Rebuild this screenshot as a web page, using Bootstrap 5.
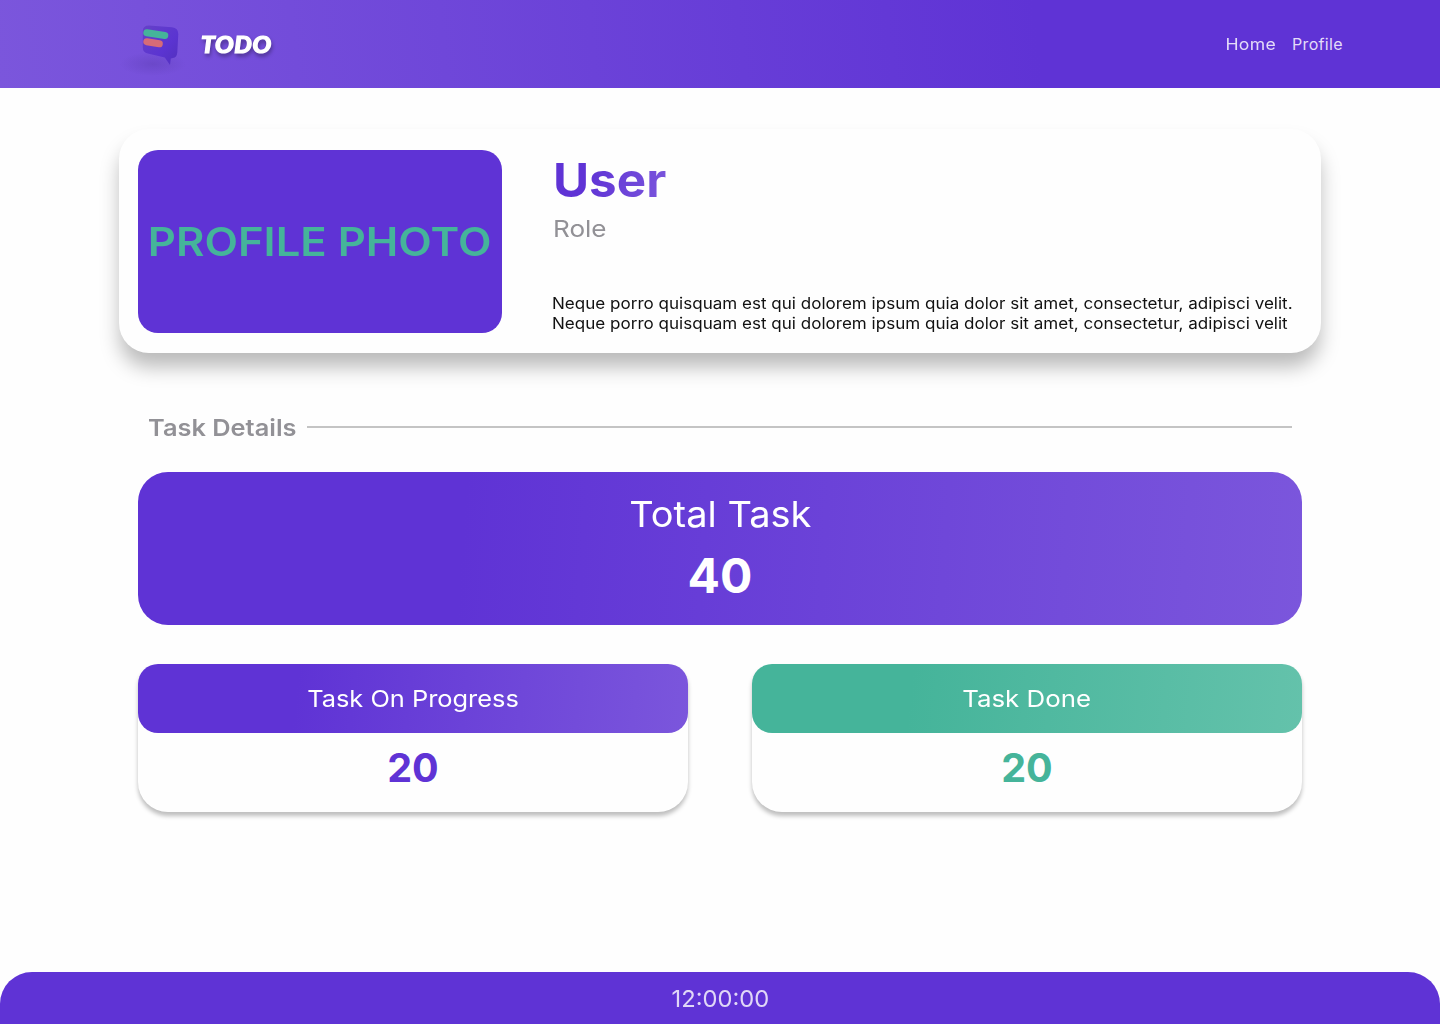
<!DOCTYPE html>
<html lang="en">
<head>
<meta charset="utf-8">
<meta name="viewport" content="width=device-width, initial-scale=1">
<title>TODO - Profile</title>
<link href="https://cdn.jsdelivr.net/npm/bootstrap@5.3.0/dist/css/bootstrap.min.css" rel="stylesheet">
<style>
  :root { --violet: #5f33d5; --violet-soft: #7b56dc; --mint: #45b49a; --mint-soft: #64c2ab; --muted: #929196; }
  body { font-family: Inter, "Open Sans", sans-serif; background: #fefefe; color: #111; line-height: 1.22; }
  /* widened lettering */
  .wide { display: inline-block; transform: scaleX(var(--stretch, 1.05)); }
  .wide-start { transform-origin: left center; }
  .topbar { height: 88px; padding: 2px 97px 0 119px; background: linear-gradient(264deg, var(--violet) 28%, var(--violet-soft) 100%); }
  .topbar svg { margin-top: -2px; }
  .topbar .nav-link { color: #e4dcf8; font-size: 16px; padding: 0; letter-spacing: .35px; }
  .nav-home { --stretch: 1.1; transform-origin: right center; }
  .brand-name { font-family: Lato, sans-serif; font-weight: 900; font-style: italic; font-size: 23.5px; margin-top: -2px; letter-spacing: .6px; -webkit-text-stroke: 1.2px #fff; color: #fff; text-shadow: 1px 3px 4px rgba(0,0,0,.45); }
  .page-body { padding: 41px 119px 0; }
  .profile-card { height: 224px; padding: 21px 19px 20px; border-radius: 30px; background: #fefefe; box-shadow: 0 15px 20px -1px rgba(0,0,0,.27); }
  .photo-box { width: 364px; height: 183px; padding-top: 1px; border-radius: 20px; background: var(--violet); color: var(--mint); font-size: 39px; font-weight: 600; --stretch: 1.118; }
  .user-info { margin-left: 51px; }
  .user-name { font-size: 47px; font-weight: 700; line-height: 59px; --stretch: 1.05; background: linear-gradient(100deg, var(--violet) 30%, var(--violet-soft)); -webkit-background-clip: text; background-clip: text; color: transparent; }
  .user-role { font-size: 23.5px; line-height: 29px; margin-top: 5px; font-weight: 400; --stretch: 1.11; color: var(--muted); }
  .user-bio { font-size: 15.5px; line-height: 20px; --stretch: 1.1; margin-left: -1px; margin-bottom: -1px; }
  .details-head { padding: 0 29px; margin-top: 60px; height: 29px; color: var(--muted); }
  .details-title { font-size: 23.5px; font-weight: 600; width: 148px; padding-top: 2px; --stretch: 1.08; }
  .details-rule { height: 2px; margin: -2px 0 0 11px; background: #c4c4c4; }
  .details-body { padding: 0 19px; }
  .total-card { margin-top: 30px; height: 153px; border-radius: 30px; color: #fff; background: linear-gradient(94deg, var(--violet) 28%, var(--violet-soft)); padding-top: 20px; }
  .total-label { font-size: 36px; line-height: 44px; font-weight: 400; --stretch: 1.055; }
  .total-value { font-size: 48px; line-height: 59px; font-weight: 750; margin-top: 10px; }
  .stat-row { margin-top: 39px; gap: 64px; }
  .stat-card { flex: 1 1 0; height: 148px; border-radius: 20px 20px 30px 30px; background: #fefefe; box-shadow: 0 4px 4px rgba(0,0,0,.25); color: var(--violet); }
  .stat-head { height: 69px; padding-top: 2px; border-radius: 20px; color: #fff; font-size: 23.5px; font-weight: 400; --stretch: 1.08; background: linear-gradient(96deg, var(--violet) 29%, var(--violet-soft)); }
  .stat-value { font-size: 39.500px; line-height: 49px; font-weight: 750; margin-top: 11px; }
  .stat-done { color: var(--mint); }
  .stat-done .stat-head { background: linear-gradient(96deg, var(--mint) 29%, var(--mint-soft)); --stretch: 1.1; }
  .clock-bar { height: 52px; padding-top: 2px; border-radius: 32px 32px 0 0; background: var(--violet); color: #e0d7f7; font-size: 23.5px; --stretch: 1.01; }
</style>
</head>
<body>
<div class="d-flex flex-column vh-100">
  <nav class="topbar d-flex align-items-center justify-content-between">
    <a class="d-flex align-items-center text-decoration-none" href="#">
      <svg width="82" height="88" viewBox="119 0 82 88" aria-hidden="true">
        <defs>
          <linearGradient id="bubble" x1="0" y1="0" x2="1" y2="1"><stop offset="0" stop-color="#6541c8"/><stop offset=".6" stop-color="#5b34d1"/><stop offset="1" stop-color="#5230bd"/></linearGradient>
          <radialGradient id="ground"><stop offset="0" stop-color="#5f3fb8" stop-opacity=".5"/><stop offset="1" stop-color="#5f3fb8" stop-opacity="0"/></radialGradient>
        </defs>
        <ellipse cx="153" cy="64" rx="33" ry="12" fill="url(#ground)"/>
        <path d="M149 25.500l23 1.800q6.300.7 6.300 6.700l-1 18.500q-.5 5-4.300 5.500l-2.200.5-.8 6.500-5.200-7.500-17-4q-5-1-5-6V31q0-5.500 6.200-5.500z" fill="url(#bubble)"/>
        <path d="M146.800 32.800l18 2.700" stroke="#45b49a" stroke-width="7" stroke-linecap="round"/>
        <path d="M146.800 41.700l12.500 2.100" stroke="#d66b78" stroke-width="7" stroke-linecap="round"/>
      </svg>
      <span class="brand-name wide wide-start">TODO</span>
    </a>
    <div class="nav">
      <a class="nav-link wide nav-home" href="#">Home</a>
      <a class="nav-link ms-3" href="#">Profile</a>
    </div>
  </nav>
  <main class="page-body flex-grow-1">
    <section class="profile-card d-flex">
      <div class="photo-box d-flex align-items-center justify-content-center flex-shrink-0 text-nowrap"><span class="wide">PROFILE PHOTO</span></div>
      <div class="user-info d-flex flex-column align-items-start text-nowrap">
        <h1 class="user-name wide wide-start mb-0">User</h1>
        <div class="user-role wide wide-start">Role</div>
        <p class="user-bio wide wide-start mt-auto">Neque porro quisquam est qui dolorem ipsum quia dolor sit amet, consectetur, adipisci velit.<br>Neque porro quisquam est qui dolorem ipsum quia dolor sit amet, consectetur, adipisci velit</p>
      </div>
    </section>
    <div class="details-head d-flex align-items-center">
      <h2 class="details-title mb-0 text-nowrap"><span class="wide wide-start">Task Details</span></h2>
      <div class="details-rule flex-grow-1"></div>
    </div>
    <div class="details-body">
      <section class="total-card text-center">
        <div class="total-label"><span class="wide">Total Task</span></div>
        <div class="total-value">40</div>
      </section>
      <div class="stat-row d-flex">
        <section class="stat-card text-center">
          <div class="stat-head d-flex align-items-center justify-content-center"><span class="wide">Task On Progress</span></div>
          <div class="stat-value">20</div>
        </section>
        <section class="stat-card stat-done text-center">
          <div class="stat-head d-flex align-items-center justify-content-center"><span class="wide">Task Done</span></div>
          <div class="stat-value">20</div>
        </section>
      </div>
    </div>
  </main>
  <footer class="clock-bar d-flex align-items-center justify-content-center"><span class="wide">12:00:00</span></footer>
</div>
<script src="https://cdn.jsdelivr.net/npm/bootstrap@5.3.0/dist/js/bootstrap.bundle.min.js"></script>
</body>
</html>
